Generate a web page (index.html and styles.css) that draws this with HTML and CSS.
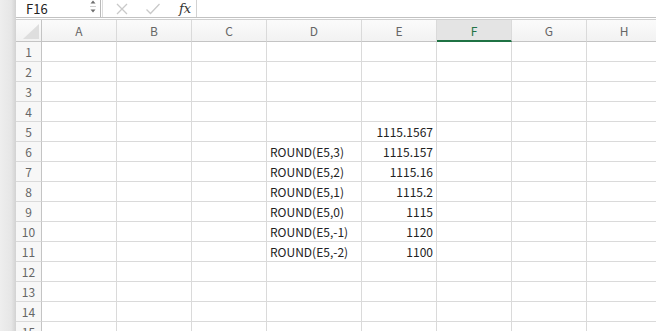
FILE: index.html
```html
<!DOCTYPE html>
<html>
<head>
<meta charset="utf-8">
<link rel="stylesheet" href="styles.css">
</head>
<body>
<div class="app">
  <div class="edge"></div>
  <div class="main">
    <div class="fbar">
      <div class="namebox">
        <span class="ref">F16</span>
        <svg class="spin" width="8" height="17" viewBox="0 0 8 17">
          <path d="M1.5 3.5 L4 0.5 L6.5 3.5 Z" fill="#6e6e6e"/>
          <line x1="1" y1="6.5" x2="7" y2="6.5" stroke="#cfcfcf"/>
          <path d="M1.5 9.5 L4 12.5 L6.5 9.5 Z" fill="#6e6e6e"/>
        </svg>
      </div>
      <div class="fbtns">
        <svg width="14" height="14" viewBox="0 0 14 14"><path d="M2 2 L12 12 M12 2 L2 12" stroke="#c9c9c9" stroke-width="1.3" fill="none"/></svg>
        <svg width="16" height="14" viewBox="0 0 16 14"><path d="M1.5 7.5 L5.5 11.5 L14.5 2" stroke="#c9c9c9" stroke-width="1.3" fill="none"/></svg>
        <span class="fx">fx</span>
      </div>
      <div class="finput"></div>
    </div>
    <div class="sheet">
      <div class="hd corner"><span class="tri"></span></div>
      <div class="hd">A</div><div class="hd">B</div><div class="hd">C</div><div class="hd">D</div><div class="hd">E</div><div class="hd sel">F</div><div class="hd">G</div><div class="hd">H</div>

      <div class="rh">1</div><div class="c"></div><div class="c"></div><div class="c"></div><div class="c"></div><div class="c"></div><div class="c"></div><div class="c"></div><div class="c"></div>
      <div class="rh">2</div><div class="c"></div><div class="c"></div><div class="c"></div><div class="c"></div><div class="c"></div><div class="c"></div><div class="c"></div><div class="c"></div>
      <div class="rh">3</div><div class="c"></div><div class="c"></div><div class="c"></div><div class="c"></div><div class="c"></div><div class="c"></div><div class="c"></div><div class="c"></div>
      <div class="rh">4</div><div class="c"></div><div class="c"></div><div class="c"></div><div class="c"></div><div class="c"></div><div class="c"></div><div class="c"></div><div class="c"></div>
      <div class="rh">5</div><div class="c"></div><div class="c"></div><div class="c"></div><div class="c"></div><div class="c num">1115.1567</div><div class="c"></div><div class="c"></div><div class="c"></div>
      <div class="rh">6</div><div class="c"></div><div class="c"></div><div class="c"></div><div class="c">ROUND(E5,3)</div><div class="c num">1115.157</div><div class="c"></div><div class="c"></div><div class="c"></div>
      <div class="rh">7</div><div class="c"></div><div class="c"></div><div class="c"></div><div class="c">ROUND(E5,2)</div><div class="c num">1115.16</div><div class="c"></div><div class="c"></div><div class="c"></div>
      <div class="rh">8</div><div class="c"></div><div class="c"></div><div class="c"></div><div class="c">ROUND(E5,1)</div><div class="c num">1115.2</div><div class="c"></div><div class="c"></div><div class="c"></div>
      <div class="rh">9</div><div class="c"></div><div class="c"></div><div class="c"></div><div class="c">ROUND(E5,0)</div><div class="c num">1115</div><div class="c"></div><div class="c"></div><div class="c"></div>
      <div class="rh">10</div><div class="c"></div><div class="c"></div><div class="c"></div><div class="c">ROUND(E5,-1)</div><div class="c num">1120</div><div class="c"></div><div class="c"></div><div class="c"></div>
      <div class="rh">11</div><div class="c"></div><div class="c"></div><div class="c"></div><div class="c">ROUND(E5,-2)</div><div class="c num">1100</div><div class="c"></div><div class="c"></div><div class="c"></div>
      <div class="rh">12</div><div class="c"></div><div class="c"></div><div class="c"></div><div class="c"></div><div class="c"></div><div class="c"></div><div class="c"></div><div class="c"></div>
      <div class="rh">13</div><div class="c"></div><div class="c"></div><div class="c"></div><div class="c"></div><div class="c"></div><div class="c"></div><div class="c"></div><div class="c"></div>
      <div class="rh">14</div><div class="c"></div><div class="c"></div><div class="c"></div><div class="c"></div><div class="c"></div><div class="c"></div><div class="c"></div><div class="c"></div>
      <div class="rh">15</div><div class="c"></div><div class="c"></div><div class="c"></div><div class="c"></div><div class="c"></div><div class="c"></div><div class="c"></div><div class="c"></div>
    </div>
  </div>
</div>
</body>
</html>
```
FILE: styles.css
```css
* { box-sizing: border-box; }
html, body { margin: 0; padding: 0; background: #fff; overflow: hidden; }
body { width: 656px; height: 331px; font-family: "Noto Sans CJK JP", "Noto Sans", sans-serif; font-size: 12px; color: #222; }

.app { display: flex; height: 331px; }
.edge { width: 16px; flex: none; background: linear-gradient(to right, #eeeeee 0%, #e6e6e6 70%, #d2d2d2 100%); }
.main { flex: 1; display: flex; flex-direction: column; min-width: 0; overflow: hidden; }

.fbar { height: 18px; flex: none; display: flex; border-bottom: 1px solid #c2c2c2; background: #fff; }
.namebox { width: 85px; display: flex; align-items: flex-start; justify-content: space-between; padding: 0 3px 0 10px; border-right: 1px solid #b9b9b9; }
.ref { line-height: 17px; color: #222; font-size: 13px; }
.spin { display: block; }
.fbtns { width: 95px; margin-left: 1px; border-left: 1px solid #dcdcdc; border-right: 1px solid #d2d2d2; display: flex; align-items: center; padding-left: 12px; gap: 16px; }
.fx { font-family: "DejaVu Serif", "Liberation Serif", serif; font-style: italic; font-size: 13px; color: #333; line-height: 17px; margin-left: 2px; }
.finput { flex: 1; }

.sheet { margin-top: 1px; border-top: 1px solid #d0d0d0; display: grid; grid-template-columns: 26px 75px 75px 75px 95px 75px 75px 75px 75px; grid-template-rows: 22px; grid-auto-rows: 20px; }
.hd { background: linear-gradient(#fbfbfb, #f2f2f2); border-right: 1px solid #dadada; border-bottom: 1px solid #c4c4c4; display: flex; align-items: center; justify-content: center; color: #666; font-size: 12px; padding-bottom: 1px; }
.hd.sel { background: #e4e4e4; color: #217346; border-bottom: 2px solid #1f7244; padding-bottom: 0; }
.corner { position: relative; border-right: 1px solid #c4c4c4; }
.tri { position: absolute; right: 2px; bottom: 2px; width: 0; height: 0; border-left: 16px solid transparent; border-bottom: 15px solid #dedede; }
.rh { background: #f7f7f7; border-right: 1px solid #c4c4c4; border-bottom: 1px solid #dadada; display: flex; align-items: center; justify-content: center; color: #666; font-size: 12px; }
.c { border-right: 1px solid #dadada; border-bottom: 1px solid #dadada; display: flex; align-items: center; padding: 0 3px; white-space: nowrap; overflow: hidden; color: #222; }
.c.num { justify-content: flex-end; }
```
